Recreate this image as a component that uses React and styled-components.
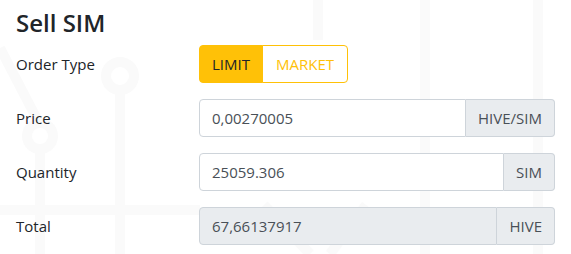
import React from 'react'
import styled, { createGlobalStyle } from 'styled-components'

const GlobalStyle = createGlobalStyle`
  html, body {
    margin: 0;
    background: #fff;
  }
  body {
    font-family: "Open Sans", "Noto Sans", sans-serif;
    color: #212529;
  }
`

const Page = styled.div`
  position: relative;
  width: 571px;
  height: 254px;
  overflow: hidden;
  background: #fff;
`

const Watermark = styled.svg`
  position: absolute;
  inset: 0;
  pointer-events: none;
`

const Form = styled.div`
  position: relative;
  padding: 8px 16px 0 16px;
`

const Title = styled.h4`
  margin: 0 0 8px;
  font-size: 24px;
  font-weight: 600;
  line-height: 29px;
  color: #212529;
`

const Row = styled.div`
  display: grid;
  grid-template-columns: 183px 1fr;
  align-items: center;
  height: 38px;
  margin-bottom: 16px;
`

const Label = styled.label`
  font-size: 15px;
  color: #212529;
`

const BtnGroup = styled.div`
  display: flex;
`

const ToggleBtn = styled.button`
  height: 38px;
  padding: 0 ${p => (p.$first ? '12px' : '13px')};
  font-family: inherit;
  font-size: 15px;
  border: 1px solid #ffc107;
  background: ${p => (p.$active ? '#ffc107' : '#fff')};
  color: ${p => (p.$active ? '#212529' : '#ffc107')};
  border-radius: ${p => (p.$first ? '4px 0 0 4px' : '0 4px 4px 0')};
  margin-left: ${p => (p.$first ? '0' : '-1px')};
  cursor: pointer;
`

const InputGroup = styled.div`
  display: flex;
  height: 38px;
`

const Input = styled.div`
  flex: 1;
  display: flex;
  align-items: center;
  padding: 0 12px;
  font-size: 15px;
  color: #495057;
  background: ${p => (p.$disabled ? '#e9ecef' : '#fff')};
  border: 1px solid #ced4da;
  border-radius: 4px 0 0 4px;
`

const Addon = styled.div`
  display: flex;
  align-items: center;
  padding: 0 12px;
  font-size: 15px;
  color: #495057;
  background: #e9ecef;
  border: 1px solid #ced4da;
  border-left: none;
  border-radius: 0 4px 4px 0;
`

function Field({ label, value, unit, disabled }) {
  return (
    <Row>
      <Label>{label}</Label>
      <InputGroup>
        <Input $disabled={disabled}>{value}</Input>
        <Addon>{unit}</Addon>
      </InputGroup>
    </Row>
  )
}

export default function App() {
  return (
    <Page>
      <GlobalStyle />
      <Watermark width="571" height="254" viewBox="0 0 571 254">
        <g stroke="#fafafa" strokeWidth="10" fill="none">
          <circle cx="120" cy="76" r="14" />
          <line x1="120" y1="90" x2="120" y2="254" />
          <line x1="0" y1="48" x2="40" y2="125" />
          <circle cx="40" cy="136" r="13" />
          <line x1="40" y1="149" x2="40" y2="254" />
          <line x1="0" y1="210" x2="200" y2="210" />
          <line x1="318" y1="0" x2="318" y2="40" />
          <line x1="425" y1="0" x2="425" y2="254" />
          <line x1="538" y1="0" x2="538" y2="254" />
          <line x1="264" y1="205" x2="310" y2="254" />
          <line x1="366" y1="205" x2="330" y2="254" />
        </g>
      </Watermark>
      <Form>
        <Title>Sell SIM</Title>
        <Row>
          <Label>Order Type</Label>
          <BtnGroup>
            <ToggleBtn $active $first>LIMIT</ToggleBtn>
            <ToggleBtn>MARKET</ToggleBtn>
          </BtnGroup>
        </Row>
        <Field label="Price" value="0,00270005" unit="HIVE/SIM" />
        <Field label="Quantity" value="25059.306" unit="SIM" />
        <Field label="Total" value="67,66137917" unit="HIVE" disabled />
      </Form>
    </Page>
  )
}
